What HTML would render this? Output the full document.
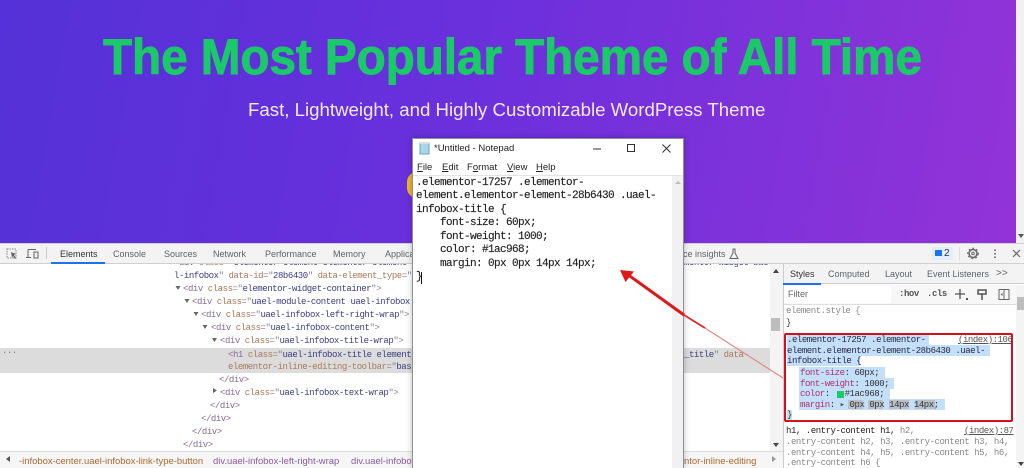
<!DOCTYPE html>
<html><head><meta charset="utf-8"><style>
html,body{margin:0;padding:0}
body{width:1024px;height:468px;overflow:hidden;position:relative;background:#fff;font-family:"Liberation Sans",sans-serif}
#w{position:absolute;left:0;top:0;width:1024px;height:468px;overflow:hidden;filter:blur(.3px)}
.a{position:absolute;white-space:pre}
.m{font-family:"Liberation Mono",monospace;font-size:9px;letter-spacing:-.45px;line-height:13px;color:#8a7f8a}
.t{color:#846a94}.n{color:#a8795a}.v{color:#3d3d80}
.tab{font-size:9px;color:#5f6368;top:249px;line-height:11px}
.bc{font-size:9.450px;color:#8a5a9a;top:456px;line-height:11px}
.np{font-family:"Liberation Mono",monospace;font-size:11px;letter-spacing:-.6px;line-height:13.45px;color:#222;-webkit-text-stroke:.15px #222}
.st{font-family:"Liberation Mono",monospace;font-size:9px;letter-spacing:-.45px;line-height:10.5px;color:#333}
.hl{position:absolute;background:#c3dff9}
</style></head><body><div id="w">
<div class="a" style="left:0;top:0;width:1016px;height:243px;background:linear-gradient(100deg,#5431d8 0%,#6a30dc 45%,#9233d8 100%)"></div>
<div class="a" style="left:1016px;top:0;width:8px;height:243px;background:#f1f1f1"></div>
<div class="a" style="left:1018px;top:234px;width:0;height:0;border:3px solid transparent;border-top:4px solid #555"></div>
<div class="a" id="h" style="left:103px;top:25px;font-size:50px;line-height:64px;font-weight:bold;color:#1ac968;letter-spacing:-.1px;-webkit-text-stroke:.9px #1ac968;transform:scaleX(.9545);transform-origin:0 50%">The Most Popular Theme of All Time</div>
<div class="a" style="left:248px;top:99px;font-size:18.650px;line-height:22px;color:#f3e9fb">Fast, Lightweight, and Highly Customizable WordPress Theme</div>
<div class="a" style="left:407px;top:172px;width:20px;height:26px;border-radius:13px;background:#eeb52a"></div>

<!-- devtools -->
<div class="a" style="left:0;top:243px;width:1024px;height:20px;background:#f3f3f3;border-top:1px solid #d0d0d0;box-sizing:border-box"></div>
<div class="a" style="left:0;top:263px;width:1024px;height:1px;background:#cfcfcf"></div>
<svg class="a" style="left:0;top:243px" width="50" height="20"><rect x="7" y="6" width="9" height="9" fill="none" stroke="#888" stroke-dasharray="1.5 1"/><path d="M11 9l5 2-2 1 2 3-1 1-2-3-1 2z" fill="#666"/><path d="M28 6.500h8M28 6.500v8h-1.500M26 14.500h5" fill="none" stroke="#666"/><rect x="34" y="9" width="4" height="6" fill="none" stroke="#666"/><path d="M46.500 4v12" stroke="#ccc"/></svg>
<div class="a tab" style="left:60px;color:#333">Elements</div>
<div class="a" style="left:51px;top:262px;width:54px;height:2px;background:#1a73e8"></div>
<div class="a tab" style="left:113px">Console</div>
<div class="a tab" style="left:164px">Sources</div>
<div class="a tab" style="left:213px">Network</div>
<div class="a tab" style="left:265px">Performance</div>
<div class="a tab" style="left:333px">Memory</div>
<div class="a tab" style="left:385px">Application</div>
<div class="a tab" style="left:678px">nce insights</div>
<svg class="a" style="left:729px;top:248px" width="10" height="12"><path d="M3.500 1h3M4 1v4L1 10.500h8L6 5V1" fill="none" stroke="#666"/></svg>
<div class="a" style="left:932px;top:247px;width:21px;height:13px;background:#e4eefb;border-radius:1px"></div>
<div class="a" style="left:935px;top:250px;width:7px;height:6px;background:#1a73e8"></div>
<div class="a" style="left:944px;top:248px;font-size:10px;line-height:12px;color:#333">2</div>
<div class="a" style="left:959px;top:247px;width:1px;height:13px;background:#ddd"></div>
<svg class="a" style="left:966px;top:247px" width="58" height="14"><circle cx="7" cy="6.500" r="4" fill="none" stroke="#666" stroke-width="1.500"/><circle cx="7" cy="6.500" r="5.300" fill="none" stroke="#666" stroke-dasharray="2 2"/><circle cx="7" cy="6.500" r="1.300" fill="none" stroke="#666"/><path d="M29 2.500v1.500M29 6v1.500M29 9.500v1.500" stroke="#555" stroke-width="1.500"/><path d="M47 3l7 7M54 3l-7 7" stroke="#666" stroke-width="1.200"/></svg>

<!-- elements code -->
<div class="a" style="left:0;top:264px;width:770px;height:6px;overflow:hidden">
<div class="a m" style="left:174px;top:-7px"><span class="t">&lt;div</span> <span class="n">class</span>="<span class="v">elementor-element elementor-element elementor-element</span></div>
<div class="a m" style="left:684px;top:-7px"><span class="v">mentor-widget-bac</span></div>
</div>
<div class="a m" style="left:174px;top:270px"><span class="v">l-infobox</span>" <span class="n">data-id</span>="<span class="v">28b6430</span>" <span class="n">data-element_type</span>="</div>
<div class="a m" style="left:183px;top:283px"><span class="t">&lt;div</span> <span class="n">class</span>="<span class="v">elementor-widget-container</span>"&gt;</div>
<div class="a m" style="left:192px;top:296px"><span class="t">&lt;div</span> <span class="n">class</span>="<span class="v">uael-module-content uael-infobox</span></div>
<div class="a m" style="left:201px;top:309px"><span class="t">&lt;div</span> <span class="n">class</span>="<span class="v">uael-infobox-left-right-wrap</span>"&gt;</div>
<div class="a m" style="left:211px;top:322px"><span class="t">&lt;div</span> <span class="n">class</span>="<span class="v">uael-infobox-content</span>"&gt;</div>
<div class="a m" style="left:220px;top:335px"><span class="t">&lt;div</span> <span class="n">class</span>="<span class="v">uael-infobox-title-wrap</span>"&gt;</div>
<div class="a" style="left:0;top:348px;width:770px;height:25px;background:#dcdcdc"></div>
<div class="a m" style="left:2px;top:345px;color:#777">...</div>
<div class="a m" style="left:228px;top:349px"><span class="t">&lt;h1</span> <span class="n">class</span>="<span class="v">uael-infobox-title element</span></div>
<div class="a m" style="left:228px;top:361px"><span class="n">elementor-inline-editing-toolbar</span>="<span class="v">bas</span></div>
<div class="a m" style="left:219px;top:374px"><span class="t">&lt;/div&gt;</span></div>
<div class="a m" style="left:220px;top:387px"><span class="t">&lt;div</span> <span class="n">class</span>="<span class="v">uael-infobox-text-wrap</span>"&gt;</div>
<div class="a m" style="left:210px;top:400px"><span class="t">&lt;/div&gt;</span></div>
<div class="a m" style="left:201px;top:413px"><span class="t">&lt;/div&gt;</span></div>
<div class="a m" style="left:192px;top:426px"><span class="t">&lt;/div&gt;</span></div>
<div class="a m" style="left:183px;top:439px"><span class="t">&lt;/div&gt;</span></div>
<svg class="a" style="left:170px;top:284px" width="60" height="115" fill="#666"><path d="M5.500 2h5l-2.500 4zM14.500 15h5l-2.500 4zM23.500 28h5l-2.500 4zM32.500 41h5l-2.500 4zM42 54h5l-2.500 4z"/><path d="M43 104v5l4-2.500z"/></svg>
<div class="a m" style="left:684px;top:349px"><span class="v">_title</span>" <span class="n">data</span>-</div>

<!-- breadcrumb -->
<div class="a" style="left:0;top:451px;width:783px;height:17px;background:#f6f6f6;border-top:1px solid #ddd;box-sizing:border-box"></div>
<div class="a bc" style="left:19px;color:#a9692e">-infobox-center.uael-infobox-link-type-button</div>
<div class="a bc" style="left:213px">div.uael-infobox-left-right-wrap</div>
<div class="a bc" style="left:351px">div.uael-infobox</div>
<div class="a bc" style="left:684px;color:#a9692e">ntor-inline-editing</div>
<div class="a" style="left:6px;top:456px;width:0;height:0;border:3px solid transparent;border-right:4px solid #555;border-left:0"></div>
<div class="a" style="left:772px;top:456px;width:0;height:0;border:3px solid transparent;border-left:4px solid #999;border-right:0"></div>

<!-- left scrollbar -->
<div class="a" style="left:770px;top:264px;width:13px;height:187px;background:#f4f4f4"></div>
<div class="a" style="left:771px;top:318px;width:9px;height:13px;background:#bdbdbd"></div>
<div class="a" style="left:773px;top:269px;width:0;height:0;border:3px solid transparent;border-bottom:4px solid #444;border-top:0"></div>
<div class="a" style="left:773px;top:443px;width:0;height:0;border:3px solid transparent;border-top:4px solid #444;border-bottom:0"></div>

<!-- styles pane -->
<div class="a" style="left:783px;top:264px;width:241px;height:204px;background:#fff;border-left:1px solid #ccc;box-sizing:border-box"></div>
<div class="a" style="left:784px;top:264px;width:240px;height:20px;background:#f3f3f3;border-bottom:1px solid #ccc;box-sizing:border-box"></div>
<div class="a tab" style="left:790px;top:269px;color:#333">Styles</div>
<div class="a" style="left:783px;top:283px;width:38px;height:2px;background:#1a73e8"></div>
<div class="a tab" style="left:828px;top:269px">Computed</div>
<div class="a tab" style="left:885px;top:269px">Layout</div>
<div class="a tab" style="left:927px;top:269px">Event Listeners</div>
<div class="a tab" style="left:996px;top:268px;font-size:10px">&gt;&gt;</div>
<div class="a" style="left:784px;top:285px;width:232px;height:20px;background:#f7f7f7;border-bottom:1px solid #ddd;box-sizing:border-box"></div>
<div class="a" style="left:784px;top:286px;width:107px;height:17px;background:#fff"></div>
<div class="a tab" style="left:788px;top:289px;color:#666">Filter</div>
<div class="a st" style="left:899px;top:289px;color:#555;font-weight:bold">:hov</div>
<div class="a st" style="left:927px;top:289px;color:#555;font-weight:bold">.cls</div>
<svg class="a" style="left:955px;top:288px" width="60" height="14"><path d="M5 1v10M0 6h10" stroke="#555" stroke-width="1.300"/><path d="M11 10h2v2h-2z" fill="#555"/><path d="M23 2h8v4h-8zM27 6v6" fill="none" stroke="#555" stroke-width="1.500"/><rect x="44" y="1.500" width="10" height="10" fill="none" stroke="#666"/><path d="M49 2v9" stroke="#666"/><path d="M47.500 5v3l-2-1.500z" fill="#666"/></svg>
<div class="a st" style="left:786px;top:306px;color:#8a8a8a">element.style {</div>
<div class="a st" style="left:786px;top:318px">}</div>

<div class="hl" style="left:787px;top:334px;width:142px;height:11px"></div>
<div class="hl" style="left:787px;top:345px;width:203px;height:10.500px"></div>
<div class="hl" style="left:787px;top:355px;width:73px;height:11px"></div>
<div class="hl" style="left:799px;top:367px;width:86px;height:11px"></div>
<div class="hl" style="left:799px;top:378px;width:95px;height:10.500px"></div>
<div class="hl" style="left:799px;top:388px;width:91px;height:11px"></div>
<div class="hl" style="left:799px;top:399px;width:146px;height:11px"></div>
<div class="hl" style="left:787px;top:410px;width:5px;height:10px"></div>
<div class="a" style="left:848px;top:400px;width:15px;height:9px;background:#b9c1c8"></div>
<div class="a" style="left:868px;top:400px;width:15px;height:9px;background:#b9c1c8"></div>
<div class="a" style="left:889px;top:400px;width:20px;height:9px;background:#b9c1c8"></div>
<div class="a" style="left:915px;top:400px;width:20px;height:9px;background:#b9c1c8"></div>
<div class="a st" style="left:787px;top:335px;color:#2a2a44">.elementor-17257 .elementor-
element.elementor-element-28b6430 .uael-
infobox-title {</div>
<div class="a st" style="left:958px;top:335px;color:#555;text-decoration:underline;width:54px;overflow:hidden">(index):106</div>
<div class="a st" style="left:800px;top:368px;line-height:10.500px"><span style="color:#b0306a">font-size</span>: 60px;
<span style="color:#b0306a">font-weight</span>: 1000;
<span style="color:#b0306a">color</span>:   #1ac968;
<span style="color:#b0306a">margin</span>: <span style="color:#555">▸</span> 0px 0px 14px 14px;</div>
<div class="a" style="left:837px;top:391px;width:7px;height:7px;background:#1ac968"></div>
<div class="a st" style="left:787px;top:410px">}</div>
<div class="a" style="left:784px;top:333px;width:229px;height:89px;border:2px solid #d3101c;border-radius:2px;box-sizing:border-box"></div>
<div class="a st" style="left:786px;top:426px;color:#222">h1, .entry-content h1, <span style="color:#888">h2,</span></div>
<div class="a st" style="left:964px;top:426px;color:#555;text-decoration:underline">(index):87</div>
<div class="a st" style="left:786px;top:437px;color:#888">.entry-content h2, h3, .entry-content h3, h4,
.entry-content h4, h5, .entry-content h5, h6,
.entry-content h6 {</div>
<div class="a" style="left:1016px;top:285px;width:8px;height:183px;background:#f4f4f4"></div>
<div class="a" style="left:1017px;top:297px;width:7px;height:13px;background:#bdbdbd"></div>
<div class="a" style="left:1018px;top:462px;width:0;height:0;border:3px solid transparent;border-top:4px solid #444;border-bottom:0"></div>

<!-- notepad -->
<div class="a" style="left:412px;top:138px;width:272px;height:330px;background:#fff;border:1px solid #8f8f9a;border-bottom:0;box-sizing:border-box;box-shadow:0 0 6px rgba(0,0,0,.25)"></div>
<svg class="a" style="left:418px;top:141px" width="14" height="14"><path d="M2 2h9v11H2z" fill="#a9d7ea" stroke="#6f9fb5"/><path d="M2 2h9" stroke="#ddd" stroke-width="2"/></svg>
<div class="a" style="left:434px;top:143px;font-size:9.500px;line-height:12px;color:#222">*Untitled - Notepad</div>
<svg class="a" style="left:590px;top:140px" width="90" height="18"><path d="M3 9h8" stroke="#333"/><rect x="37.500" y="4.500" width="7" height="7" fill="none" stroke="#333"/><path d="M72.500 4.500l8 8M80.500 4.500l-8 8" stroke="#333"/></svg>
<div class="a" style="left:417px;top:162px;font-size:9.500px;line-height:12px;color:#222"><u>F</u>ile</div>
<div class="a" style="left:442px;top:162px;font-size:9.500px;line-height:12px;color:#222"><u>E</u>dit</div>
<div class="a" style="left:467px;top:162px;font-size:9.500px;line-height:12px;color:#222">F<u>o</u>rmat</div>
<div class="a" style="left:507px;top:162px;font-size:9.500px;line-height:12px;color:#222"><u>V</u>iew</div>
<div class="a" style="left:536px;top:162px;font-size:9.500px;line-height:12px;color:#222"><u>H</u>elp</div>
<div class="a" style="left:413px;top:175px;width:270px;height:1px;background:#e3e3e3"></div>
<div class="a np" style="left:416px;top:177px">.elementor-17257 .elementor-
element.elementor-element-28b6430 .uael-
infobox-title {
    font-size: 60px;
    font-weight: 1000;
    color: #1ac968;
    margin: 0px 0px 14px 14px;
}</div>
<div class="a" style="left:421px;top:272px;width:1px;height:12px;background:#111"></div>
<div class="a" style="left:672px;top:176px;width:11px;height:292px;background:#f1f1f1"></div>
<div class="a" style="left:675px;top:181px;width:0;height:0;border:3px solid transparent;border-bottom:3px solid #bbb;border-top:0"></div>

<!-- arrow -->
<svg class="a" style="left:600px;top:250px" width="190" height="140"><path d="M183 128L105 78" stroke="#e08a8a" stroke-width="1.200"/><path d="M105 78L84 65" stroke="#dc2a2a" stroke-width="1.800"/><path d="M84 65L27 24" stroke="#dc1a1a" stroke-width="3"/><path d="M20 20L34 21.500L25.500 32Z" fill="#dc1a1a"/></svg>
</div></body></html>
